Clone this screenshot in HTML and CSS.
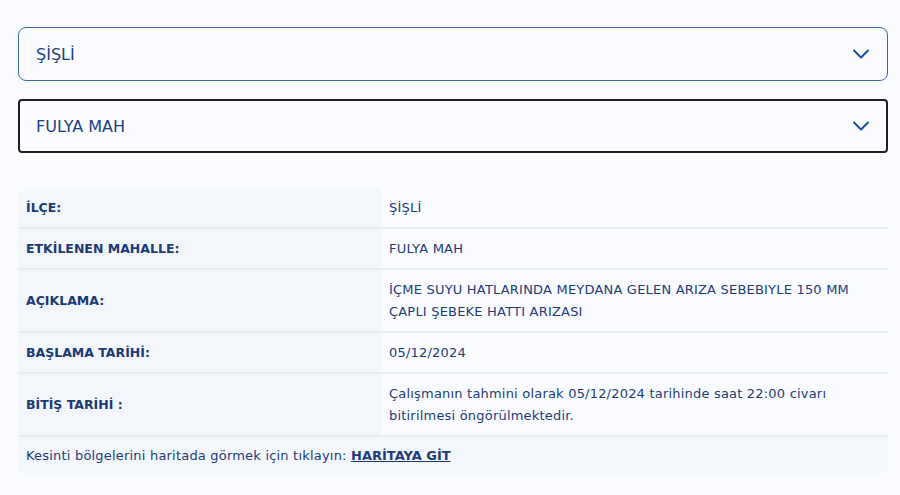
FILE: index.html
```html
<!DOCTYPE html>
<html lang="tr">
<head>
  <meta charset="UTF-8">
  <title>Arıza Kesinti Bilgisi</title>
  <link rel="stylesheet" href="styles.css">
</head>
<body>
  <div class="page">
    <div class="select">
      <span>ŞİŞLİ</span>
      <svg class="chevron" width="18" height="18" viewBox="0 0 18 18"><path d="M2 5.5l7 7 7-7" fill="none" stroke="#1b4f9c" stroke-width="2" stroke-linecap="round" stroke-linejoin="round"/></svg>
    </div>
    <div class="select focused">
      <span>FULYA MAH</span>
      <svg class="chevron" width="18" height="18" viewBox="0 0 18 18"><path d="M2 5.5l7 7 7-7" fill="none" stroke="#1b4f9c" stroke-width="2" stroke-linecap="round" stroke-linejoin="round"/></svg>
    </div>

    <div class="info">
      <table>
        <tr>
          <th>İLÇE:</th>
          <td>ŞİŞLİ</td>
        </tr>
        <tr>
          <th>ETKİLENEN MAHALLE:</th>
          <td>FULYA MAH</td>
        </tr>
        <tr>
          <th>AÇIKLAMA:</th>
          <td>İÇME SUYU HATLARINDA MEYDANA GELEN ARIZA SEBEBIYLE 150 MM ÇAPLI ŞEBEKE HATTI ARIZASI</td>
        </tr>
        <tr>
          <th>BAŞLAMA TARİHİ:</th>
          <td>05/12/2024</td>
        </tr>
        <tr>
          <th>BİTİŞ TARİHİ :</th>
          <td>Çalışmanın tahmini olarak 05/12/2024 tarihinde saat 22:00 civarı bitirilmesi öngörülmektedir.</td>
        </tr>
      </table>
      <p class="map-link">Kesinti bölgelerini haritada görmek için tıklayın: <a href="#">HARİTAYA GİT</a></p>
    </div>
  </div>
</body>
</html>
```

FILE: styles.css
```css
/* Genel */
body {
  margin: 0;
  padding: 0;
  background-color: #fafbfe;
  font-family: "DejaVu Sans", Arial, sans-serif;
  color: #1d3b78;
}

.page {
  padding: 27px 12px 20px 18px;
}

/* Seçim kutuları */
.select {
  display: flex;
  align-items: center;
  justify-content: space-between;
  height: 54px;
  box-sizing: border-box;
  padding: 0 17px 0 17px;
  border: 1px solid #3e68ad;
  border-radius: 8px;
  background-color: #fafcff;
  font-size: 16px;
  color: #1c3f82;
  margin-bottom: 18px;
}

.select.focused {
  border: 2px solid #1f1f22;
  border-radius: 4px;
  padding-left: 16px;
  padding-right: 16px;
}

.chevron {
  display: block;
}

/* Bilgi tablosu */
.info {
  margin-top: 35px;
  background-color: #f3f6fb;
  border-radius: 10px;
  overflow: hidden;
}

.info table {
  width: 100%;
  border-collapse: collapse;
}

.info th,
.info td {
  font-size: 13px;
  line-height: 22px;
  padding: 9px 8px 8px;
  text-align: left;
  vertical-align: middle;
  border-bottom: 2px solid #e9edf2;
}

.info th {
  width: 347px;
  font-size: 12.5px;
  font-weight: 700;
  color: #1a3b72;
  background-color: #f3f6fb;
}

.info td {
  font-weight: 400;
  letter-spacing: 0.2px;
  background-color: #f9fbfe;
}

.map-link {
  margin: 0;
  padding: 8px;
  font-size: 13px;
  line-height: 22px;
  letter-spacing: 0.2px;
}

.map-link a {
  color: #1d3b78;
  font-weight: 700;
  letter-spacing: 0;
}
```
